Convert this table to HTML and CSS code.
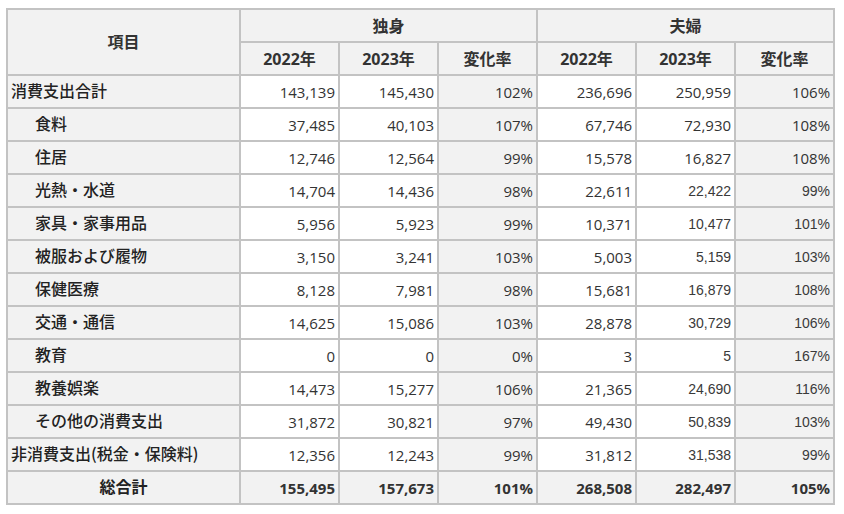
FILE: index.html
```html
<!DOCTYPE html>
<html lang="ja">
<head>
<meta charset="utf-8">
<link rel="stylesheet" href="styles.css">
</head>
<body>
<table class="t">
<colgroup><col class="c-item"><col class="c-num"><col class="c-num"><col class="c-num"><col class="c-num"><col class="c-num"><col class="c-num"></colgroup>
<thead>
<tr><th rowspan="2">項目</th><th colspan="3">独身</th><th colspan="3">夫婦</th></tr>
<tr><th>2022年</th><th>2023年</th><th>変化率</th><th>2022年</th><th>2023年</th><th>変化率</th></tr>
</thead>
<tbody>
<tr><td class="lab">消費支出合計</td><td>143,139</td><td>145,430</td><td class="r">102%</td><td>236,696</td><td>250,959</td><td class="r">106%</td></tr>
<tr><td class="lab sub">食料</td><td>37,485</td><td>40,103</td><td class="r">107%</td><td>67,746</td><td>72,930</td><td class="r">108%</td></tr>
<tr><td class="lab sub">住居</td><td>12,746</td><td>12,564</td><td class="r">99%</td><td>15,578</td><td>16,827</td><td class="r">108%</td></tr>
<tr><td class="lab sub">光熱・水道</td><td>14,704</td><td>14,436</td><td class="r">98%</td><td>22,611</td><td class="nw">22,422</td><td class="r nw">99%</td></tr>
<tr><td class="lab sub">家具・家事用品</td><td>5,956</td><td>5,923</td><td class="r">99%</td><td>10,371</td><td class="nw">10,477</td><td class="r nw">101%</td></tr>
<tr><td class="lab sub">被服および履物</td><td>3,150</td><td>3,241</td><td class="r">103%</td><td>5,003</td><td class="nw">5,159</td><td class="r nw">103%</td></tr>
<tr><td class="lab sub">保健医療</td><td>8,128</td><td>7,981</td><td class="r">98%</td><td>15,681</td><td class="nw">16,879</td><td class="r nw">108%</td></tr>
<tr><td class="lab sub">交通・通信</td><td>14,625</td><td>15,086</td><td class="r">103%</td><td>28,878</td><td class="nw">30,729</td><td class="r nw">106%</td></tr>
<tr><td class="lab sub">教育</td><td>0</td><td>0</td><td class="r">0%</td><td>3</td><td class="nw">5</td><td class="r nw">167%</td></tr>
<tr><td class="lab sub">教養娯楽</td><td>14,473</td><td>15,277</td><td class="r">106%</td><td>21,365</td><td class="nw">24,690</td><td class="r nw">116%</td></tr>
<tr><td class="lab sub">その他の消費支出</td><td>31,872</td><td>30,821</td><td class="r">97%</td><td>49,430</td><td class="nw">50,839</td><td class="r nw">103%</td></tr>
<tr><td class="lab">非消費支出(税金・保険料)</td><td>12,356</td><td>12,243</td><td class="r">99%</td><td>31,812</td><td class="nw">31,538</td><td class="r nw">99%</td></tr>
<tr class="total"><td class="lab">総合計</td><td>155,495</td><td>157,673</td><td>101%</td><td>268,508</td><td>282,497</td><td>105%</td></tr>
</tbody>
</table>
</body>
</html>
```
FILE: styles.css
```css
html, body {
  margin: 0;
  background: #ffffff;
}
body {
  padding: 8px 0 0 6px;
  font-family: "Open Sans", "Noto Sans CJK JP", sans-serif;
  color: #333333;
}
.t {
  border-collapse: separate;
  border-spacing: 0;
  table-layout: fixed;
  width: 829px;
  border-left: 2px solid #c3c3c3;
  border-top: 2px solid #c3c3c3;
}
.c-item { width: 233px; }
.c-num { width: 99px; }
.t th, .t td {
  box-sizing: border-box;
  height: 33px;
  padding: 0 3px;
  border-right: 2px solid #c3c3c3;
  border-bottom: 2px solid #c3c3c3;
  white-space: nowrap;
  overflow: hidden;
}
.t th {
  background: #f2f2f2;
  font-weight: bold;
  font-size: 16px;
  text-align: center;
  color: #333333;
  padding-bottom: 2px;
}
.t td {
  font-size: 15px;
  text-align: right;
  background: #ffffff;
}
.t td.r { background: #f2f2f2; }
.t td.lab {
  background: #f2f2f2;
  text-align: left;
  font-size: 16px;
  font-weight: 500;
  color: #222222;
  font-family: "Noto Sans CJK JP", sans-serif;
  padding-left: 3px;
  padding-bottom: 3px;
}
.t td.sub { padding-left: 27px; }
.t td.nw {
  font-family: "Liberation Sans", sans-serif;
  font-size: 14px;
  color: #3a3a3a;
}
.t tr.total td {
  background: #f2f2f2;
  font-weight: bold;
}
.t tr.total td.lab {
  text-align: center;
  font-weight: bold;
}
```
